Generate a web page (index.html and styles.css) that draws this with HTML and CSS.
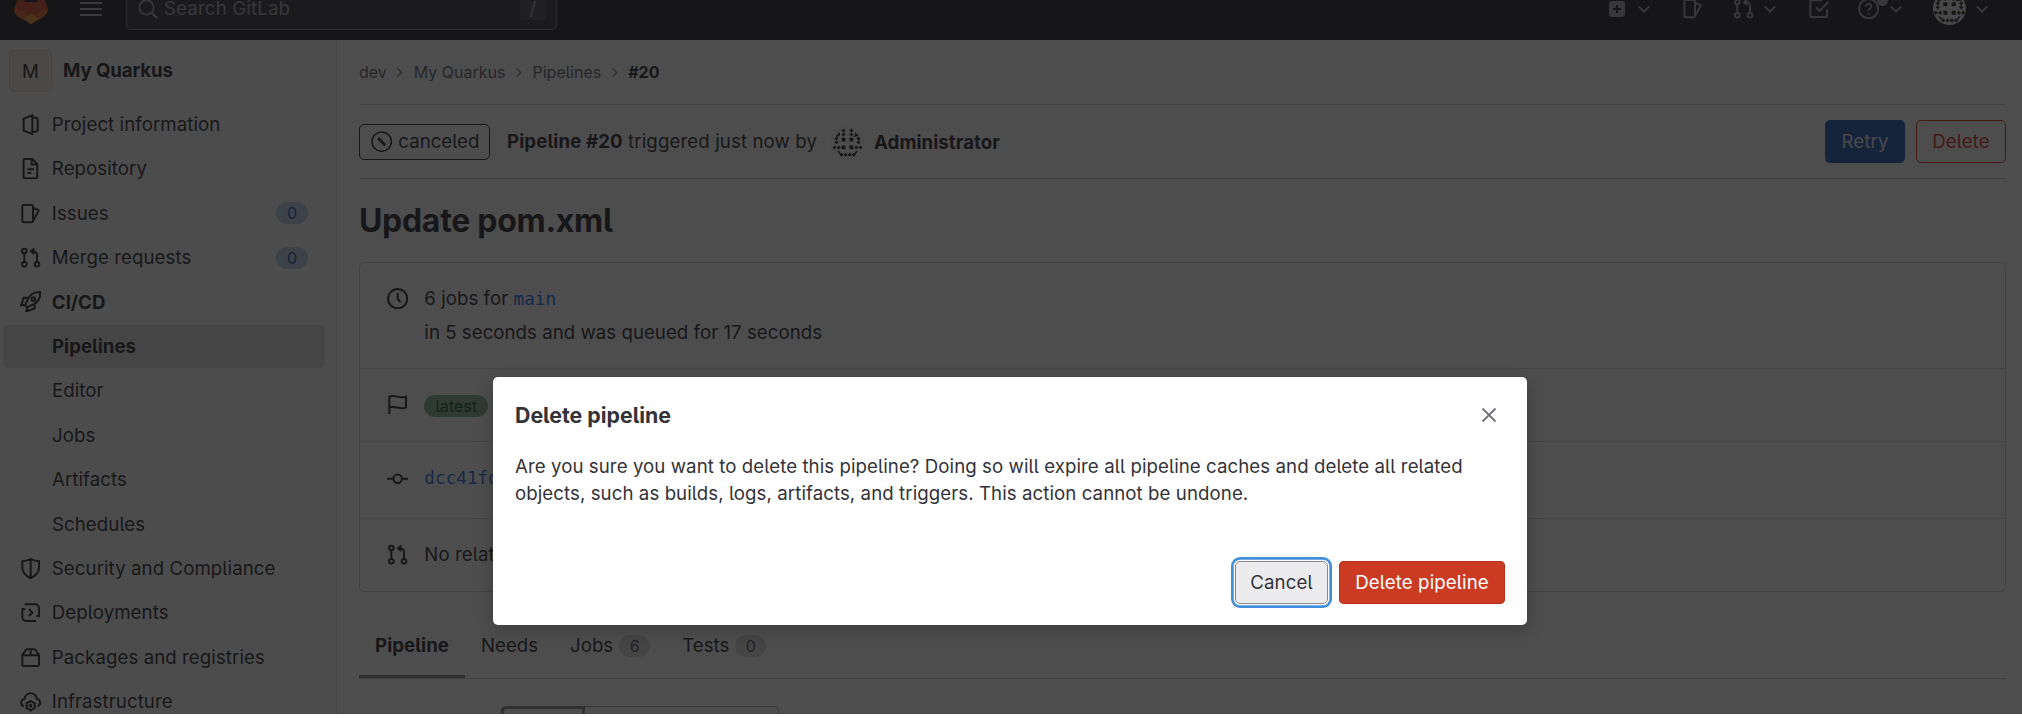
FILE: index.html
```html
<!DOCTYPE html>
<html lang="en">
<head>
<meta charset="utf-8">
<title>Pipeline #20 · My Quarkus · GitLab</title>
<link rel="stylesheet" href="styles.css">
</head>
<body>
<svg class="defs" aria-hidden="true">
  <symbol id="chevron" viewBox="0 0 12 12"><path d="M1.5 3.700 6 8.200l4.500-4.500"/></symbol>
  <symbol id="crumb" viewBox="0 0 12 12"><path d="M4 2l4 4-4 4"/></symbol>
  <symbol id="project" viewBox="0 0 16 16"><path d="M9.250 1v14L2.750 12.500v-9zM9.250 2.750h2.500a1.500 1.500 0 0 1 1.500 1.500v7.500a1.500 1.500 0 0 1-1.500 1.500h-2.500"/></symbol>
  <symbol id="doc" viewBox="0 0 16 16"><path d="M3.700.750h5.500l3.800 3.800v9.700a1 1 0 0 1-1 1H3.700a1 1 0 0 1-1-1V1.750a1 1 0 0 1 1-1zM8.750 1v3.800h4M5.500 8.500h5M5.500 11.250h3"/></symbol>
  <symbol id="issues" viewBox="0 0 16 16"><path d="M2.750 1.500h6a1 1 0 0 1 1 1v11a1 1 0 0 1-1 1h-6a1 1 0 0 1-1-1v-11a1 1 0 0 1 1-1zM10 3.600l3.600 1.500a.6.6 0 0 1 .3.800L10 13.200"/></symbol>
  <symbol id="merge" viewBox="0 0 16 16"><circle cx="3.250" cy="3" r="1.750"/><circle cx="3.250" cy="13" r="1.750"/><circle cx="12.750" cy="13" r="1.750"/><path d="M3.250 4.750v6.500M12.750 11.250V6a2.750 2.750 0 0 0-2.750-2.750H8.500M10.600 1.100 8.300 3.250l2.300 2.100"/></symbol>
  <symbol id="rocket" viewBox="0 0 16 16"><path d="M15.200.8C10.500.6 6.600 3 5 8.200L3.700 10.500l1.800 1.800L7.800 11C13 9.400 15.400 5.500 15.200.8zM6.200 5.200 2.800 5 .8 10.800l3-.5M10.800 9.800l.2 3.400-6.200 2 .7-3"/><circle cx="10" cy="6" r="1.400"/></symbol>
  <symbol id="shield" viewBox="0 0 16 16"><path d="M8 .9c2 1 4 1.500 6.250 1.500v5c0 3.600-2.500 6-6.250 7.800C4.250 13.400 1.750 11 1.750 7.400v-5C4 2.400 6 1.900 8 .9zM8 1v14"/></symbol>
  <symbol id="deploy" viewBox="0 0 16 16"><path d="M3.500 1.750h8A2.750 2.750 0 0 1 14.250 4.500v6h-1.900M12 14.250H4.500a2.750 2.750 0 0 1-2.750-2.750V5.250H4M6.700 5.500 9.200 8l-2.500 2.500"/></symbol>
  <symbol id="package" viewBox="0 0 16 16"><path d="M1.750 6v7.250a1 1 0 0 0 1 1h10.500a1 1 0 0 0 1-1V6L11.600 2.200a1 1 0 0 0-.8-.450H5.200a1 1 0 0 0-.8.450zM1.750 6.250h12.500M8 2v4"/></symbol>
  <symbol id="infra" viewBox="0 0 16 16"><path d="M2.800 11.500C1.600 11 .9 10 .9 8.800c0-1.500 1-2.600 2.500-2.900C3.700 3.400 5.600 1.700 8 1.700s4.300 1.700 4.600 4.200c1.500.3 2.500 1.400 2.500 2.900 0 1.200-.7 2.200-1.900 2.700"/><circle cx="8" cy="11" r="3.100"/><circle cx="8" cy="11" r=".6"/><path d="M8 6.700v1.200M8 14.100v1.200M4.300 8.900l1 .5M10.700 12.600l1 .5M11.700 8.900l-1 .5M5.300 12.600l-1 .5"/></symbol>
  <symbol id="clock" viewBox="0 0 16 16"><circle cx="8" cy="8" r="7.200"/><path d="M8 3.500V8l2.200 2.700"/></symbol>
  <symbol id="flag" viewBox="0 0 16 16"><path d="M1.750 15V1.900C6 .2 9.500 3.800 14.250 2v8.200c-4.500 1.800-8.200-1.700-12.500-.2"/></symbol>
  <symbol id="commit" viewBox="0 0 16 16"><circle cx="8" cy="8" r="3.200"/><path d="M0 8h4.700M11.300 8H16"/></symbol>
  <symbol id="identicon" viewBox="0 0 31 31">
    <path class="ink" d="M4 8 8 4v3L6 9zM27 8l-4-4v3l-2 2zM5 23h2l2 3v2zM26 23h-2l-2 3v2zM9.700 9.700h3.800v3.800H9.700zM17.500 9.700h3.800v3.800h-3.800zM9.700 17.500h3.800v3.800H9.700zM17.500 17.500h3.800v3.800h-3.800z"/>
    <path class="stitch" d="M9.800 2.500h3.600M9.800 6.500h3.600M17.600 2.500h3.600M17.600 6.500h3.600M2.700 10.500h3.600M24.700 10.500h3.600M2.700 14.300h3.600M24.700 14.300h3.600M.8 19.500h3.600M5 19.500h3.600M22.400 19.500H26M26.600 19.500h3.600M8 26.700h3.400M12 26.700h3.400M16 26.700h3.400M20 26.700h3.400"/>
    <path class="stitch" d="M11.600.7v3.600M11.600 4.700v3.600M19.400.7v3.600M19.400 4.700v3.600M4.500 8.700v3.600M26.500 8.700v3.600M4.500 12.500v3.600M26.500 12.500v3.600M2.600 17.700v3.600M6.800 17.700v3.600M24.200 17.700v3.600M28.400 17.700v3.600M9.700 25v3.400M13.700 25v3.400M17.700 25v3.400M21.700 25v3.400"/>
  </symbol>
</svg>

<div class="app">
  <header class="navbar">
    <svg class="logo" viewBox="0 0 34 32"><path fill="#d8432a" d="M6 0 1 14c-2 5 0 8 3 10l13 8 13-8c3-2 5-5 3-10L28 0l-5 10H11z"/><path fill="#e8622a" d="M0 17c4 0 8 2 11 4l6 5 6-5c3-2 7-4 11-4 0 3-2 6-4 7.500L17 32 4 24.500C2 23 0 20 0 17z"/><path fill="#e89a2a" d="m17 21.500 7 5L17 32l-7-5.500z"/></svg>
    <div class="burger"><i></i><i></i><i></i></div>
    <div class="search">
      <svg class="icon" viewBox="0 0 16 16"><circle cx="6.800" cy="6.800" r="5.700"/><path d="m11 11 4.200 4.200"/></svg>
      <span>Search GitLab</span><kbd>/</kbd>
    </div>
    <nav class="tools">
      <div class="tool t-new"><span class="new"><svg viewBox="0 0 16 16"><path d="M8 4v8M4 8h8"/></svg></span><svg class="chev"><use href="#chevron"/></svg></div>
      <div class="tool t-issues"><svg class="icon"><use href="#issues"/></svg></div>
      <div class="tool t-merge"><svg class="icon"><use href="#merge"/></svg><svg class="chev"><use href="#chevron"/></svg></div>
      <div class="tool t-todo"><svg class="icon" viewBox="0 0 16 16"><path d="M10.500 1.750H2.750a1 1 0 0 0-1 1v10.500a1 1 0 0 0 1 1h10.500a1 1 0 0 0 1-1V8.500M6 7l2.700 2.700L15.300 3"/></svg></div>
      <div class="tool t-help"><svg class="icon" viewBox="0 0 16 16"><circle cx="8" cy="8" r="7.200"/><path d="M6 6.300c0-2.600 4.200-2.400 4 .1C9.900 7.900 8 7.800 8 9.500M8 11v1.400"/></svg><b class="dot"></b><svg class="chev"><use href="#chevron"/></svg></div>
      <div class="tool t-user"><svg class="face light"><use href="#identicon"/></svg><svg class="chev"><use href="#chevron"/></svg></div>
    </nav>
  </header>

  <div class="columns">
    <aside class="sidebar">
      <div class="project"><span class="letter">M</span><strong>My Quarkus</strong></div>
      <a class="item"><svg class="icon"><use href="#project"/></svg><span>Project information</span></a>
      <a class="item"><svg class="icon"><use href="#doc"/></svg><span>Repository</span></a>
      <a class="item"><svg class="icon"><use href="#issues"/></svg><span>Issues</span><em>0</em></a>
      <a class="item"><svg class="icon"><use href="#merge"/></svg><span>Merge requests</span><em>0</em></a>
      <a class="item bold"><svg class="icon"><use href="#rocket"/></svg><span>CI/CD</span></a>
      <a class="item sub bold active"><span>Pipelines</span></a>
      <a class="item sub"><span>Editor</span></a>
      <a class="item sub"><span>Jobs</span></a>
      <a class="item sub"><span>Artifacts</span></a>
      <a class="item sub"><span>Schedules</span></a>
      <a class="item"><svg class="icon"><use href="#shield"/></svg><span>Security and Compliance</span></a>
      <a class="item"><svg class="icon"><use href="#deploy"/></svg><span>Deployments</span></a>
      <a class="item"><svg class="icon"><use href="#package"/></svg><span>Packages and registries</span></a>
      <a class="item"><svg class="icon"><use href="#infra"/></svg><span>Infrastructure</span></a>
    </aside>

    <main class="content">
      <div class="crumbs"><span>dev</span><svg><use href="#crumb"/></svg><span>My Quarkus</span><svg><use href="#crumb"/></svg><span>Pipelines</span><svg><use href="#crumb"/></svg><b>#20</b></div>
      <div class="status">
        <span class="canceled"><svg class="icon" viewBox="0 0 16 16"><circle cx="8" cy="8" r="7.300"/><path class="slash" d="m5.300 5.300 5.400 5.400"/></svg><span>canceled</span></span>
        <span class="who"><b>Pipeline #20</b> triggered just now by</span>
        <svg class="face"><use href="#identicon"/></svg>
        <b class="admin">Administrator</b>
        <span class="actions"><button class="btn retry">Retry</button><button class="btn remove">Delete</button></span>
      </div>
      <h1>Update pom.xml</h1>
      <section class="card">
        <div class="row jobs"><svg class="icon"><use href="#clock"/></svg><div><p>6 jobs for <code>main</code></p><p class="second">in 5 seconds and was queued for 17 seconds</p></div></div>
        <div class="row flag"><svg class="icon"><use href="#flag"/></svg><span class="latest">latest</span></div>
        <div class="row commit"><svg class="icon"><use href="#commit"/></svg><code>dcc41fd8</code></div>
        <div class="row related"><svg class="icon"><use href="#merge"/></svg><span>No related merge requests found.</span></div>
      </section>
      <div class="tabs">
        <span class="tab current">Pipeline</span><span class="tab">Needs</span><span class="tab">Jobs<em>6</em></span><span class="tab">Tests<em>0</em></span>
      </div>
      <div class="switch"><span class="on"></span><span></span></div>
    </main>
  </div>

  <div class="backdrop">
    <div class="modal">
      <header><h2>Delete pipeline</h2><svg class="close" viewBox="0 0 16 16"><path d="m1.500 1.500 13 13M14.500 1.500l-13 13"/></svg></header>
      <p>Are you sure you want to delete this pipeline? Doing so will expire all pipeline caches and delete all related<br>objects, such as builds, logs, artifacts, and triggers. This action cannot be undone.</p>
      <footer><button class="btn cancel">Cancel</button><button class="btn danger">Delete pipeline</button></footer>
    </div>
  </div>
</div>
</body>
</html>
```
FILE: styles.css
```css
* { box-sizing: border-box; }
body {
  margin: 0;
  background: #fff;
  color: #1f1e24;
  font: 18.67px/26.67px Inter, "Liberation Sans", sans-serif;
  font-feature-settings: "cv05";
  letter-spacing: .07px;
}
p, h1, h2 { margin: 0; }
b, strong { font-weight: 650; }
em { font-style: normal; }
code { font: 17.7px/26.67px "DejaVu Sans Mono", monospace; letter-spacing: 0; color: #1868d8; }
svg { fill: none; stroke: currentColor; flex: none; display: block; }
.defs { display: none; }
.icon { width: 21.33px; height: 21.33px; stroke-width: 1.5; }

.app { position: relative; height: 714px; overflow: hidden; background: #fff; }

.navbar {
  display: flex;
  align-items: center;
  height: 64px;
  margin-top: -24px;
  padding-left: 14px;
  background: #1c1c20;
  color: #a4a4a9;
}
.logo { width: 34px; height: 32px; stroke: none; }
.burger { display: grid; gap: 4px; width: 22px; margin-left: 32px; padding-top: 1px; }
.burger i { height: 2px; background: #b4b4b9; }
.search {
  display: flex;
  align-items: center;
  width: 431px;
  height: 43px;
  margin-left: 24px;
  padding: 0 10px 0 11px;
  border: 1px solid #77777d;
  border-radius: 5px;
  background: #302f38;
}
.search span { margin-left: 6px; flex: 1; padding-top: 3px; letter-spacing: .15px; }
.search .icon { width: 20px; height: 20px; margin-top: 2px; }
.search kbd {
  width: 26px;
  height: 24px;
  border-radius: 4px;
  background: #46454d;
  font: inherit;
  line-height: 26px;
  text-align: center;
}
.tools { display: flex; flex: 1; justify-content: flex-end; padding-right: 33px; }
.tool { display: flex; align-items: center; height: 34px; padding-top: 1px; }
.chev { width: 14px; height: 14px; stroke-width: 1.6; }
.new { width: 16px; height: 16px; border-radius: 3px; background: #a4a4a9; margin-right: 12px; color: #1c1c20; }
.new svg { stroke-width: 2; }
.t-issues { margin-left: 31px; }
.t-merge { margin-left: 30px; }
.t-merge .icon { margin-right: 9px; }
.t-todo { margin-left: 31px; }
.t-help { margin-left: 28px; position: relative; }
.t-help .icon { margin-right: 10px; }
.dot { position: absolute; left: 19px; top: 4px; width: 11px; height: 11px; border-radius: 50%; background: #a4a4a9; }
.t-user { margin-left: 30px; }
.t-user .chev { margin-left: 9px; }
.face { width: 31px; height: 31px; border-radius: 50%; box-shadow: 0 0 0 1px #eeeef0; color: #1c1c0c; }
.ink { fill: currentColor; stroke: none; }
.stitch { stroke-width: 1.4; }
.light { width: 33px; height: 33px; background: #e6e6e8; box-shadow: none; }

.columns { display: flex; height: 674px; }
.sidebar {
  width: 337px;
  flex: none;
  padding: 9px 11px 0 3px;
  border-right: 1px solid #e2e2e4;
  background: #fbfbfb;
}
.project { display: flex; align-items: center; height: 43px; margin: 0 0 11.200px 6px; }
.project strong { padding-top: 1px; letter-spacing: -.1px; }
.letter {
  width: 43px;
  height: 42px;
  margin-right: 11px;
  border: 1px solid #e6d4c0;
  border-radius: 5px;
  background: #faead8;
  line-height: 41px;
  text-align: center;
}
.item { display: flex; align-items: center; height: 42.67px; margin-bottom: 1.750px; padding: 0 17px 0 16.500px; border-radius: 5px; }
.item span { padding-top: 1.500px; }
.item .icon { margin-right: 11px; }
.item em { margin-left: auto; width: 32px; background: #b8cfe4; color: #0a56bc; }
.item.sub { padding-left: 49px; }
.bold { font-weight: 650; letter-spacing: 0; }
.active { background: #dcdcde; }
em { height: 22px; border-radius: 11px; font-size: 16px; line-height: 22px; text-align: center; }

.content { flex: 1; padding: 0 16px 0 22px; }
.crumbs {
  display: flex;
  align-items: center;
  height: 65px;
  border-bottom: 1px solid #cfcfd2;
  font-size: 16px;
  letter-spacing: 0;
  color: #5c5b63;
}
.crumbs svg { width: 13px; height: 13px; margin: 0 8px 0 6px; stroke-width: 1.1; color: #77767d; }
.crumbs svg:nth-of-type(n+2) { margin: 0 7px; }
.crumbs b { color: #1f1e24; }
.status { display: flex; align-items: center; height: 74px; border-bottom: 1px solid #cfcfd2; }
.canceled {
  display: flex;
  align-items: center;
  width: 131px;
  height: 36px;
  margin-top: 1px;
  padding-left: 11px;
  border: 1px solid #1f1e24;
  border-radius: 5px;
  letter-spacing: 0;
}
.canceled .icon { margin-right: 6px; stroke-width: 1.2; }
.canceled .slash { stroke-width: 2.2; }
.who { margin: 0 15px 0 17px; padding-top: 2px; letter-spacing: .11px; }
.status .face { margin-top: 3px; }
.admin { margin-left: 11px; padding-top: 4px; letter-spacing: .05px; }
.actions { display: flex; gap: 11px; margin-left: auto; }
.btn {
  height: 43px;
  padding: 2px 0 0;
  border: 0;
  border-radius: 5px;
  font: inherit;
  letter-spacing: .12px;
  font-feature-settings: inherit;
}
.retry { width: 80px; background: #1550b0; color: #e8e8ea; }
.remove { width: 90px; border: 1px solid #d62a12; background: none; color: #d62a12; }
h1 { font-size: 32px; line-height: 40px; font-weight: 650; letter-spacing: -.3px; margin: 22px 0 21px; }
.card { border: 1px solid #cfcfd2; border-radius: 5px; height: 330px; }
.row { display: flex; align-items: center; padding-left: 27px; border-bottom: 1px solid #dcdcde; }
.row .icon { margin-right: 16px; }
.jobs { height: 106px; }
.jobs div { padding-top: 2px; letter-spacing: .03px; }
.jobs .icon { margin-top: -34px; }
.second { margin-top: 7px; }
.flag { height: 73px; }
.flag .latest { margin-top: 1px; }
.commit { height: 77px; padding-bottom: 3px; }
.related { height: 72px; border: 0; }
.latest { width: 64px; height: 22px; border-radius: 11px; background: #80b08c; color: #0c4a1c; font-size: 16px; line-height: 22px; text-align: center; }
.tabs { display: flex; height: 87px; padding-top: 21px; border-bottom: 1px solid #cfcfd2; }
.tab { display: flex; align-items: center; height: 65px; padding: 2px 16px 0; letter-spacing: 0; }
.tab em { width: 31px; margin: -2px 0 0 6px; background: #dcdcde; color: #4c4b51; }
.tab.current { font-weight: 650; border-bottom: 3px solid #89888d; padding-top: 5px; letter-spacing: .05px; }
.switch { display: flex; width: 278px; height: 43px; margin: 27px 0 0 142px; border: 1px solid #a4a3a8; border-radius: 5px; }
.on { width: 84px; margin: -1px; border: 3px solid #89888d; border-radius: 5px 0 0 5px; }

.backdrop { position: absolute; inset: 0; background: rgba(21, 21, 23, .76); padding-top: 377px; }
.modal {
  width: 1034px;
  height: 248px;
  margin-left: 493px;
  padding: 24px 22px 21px;
  display: flex;
  flex-direction: column;
  border-radius: 5px;
  background: #fff;
  color: #333238;
  box-shadow: 0 5px 16px rgba(0, 0, 0, .22);
}
.modal header { display: flex; justify-content: space-between; align-items: center; height: 28px; }
h2 { font-size: 21.33px; font-weight: 650; letter-spacing: 0; }
.close { width: 16px; height: 16px; margin-right: 8px; color: #737278; stroke-width: 1.8; }
.modal p { margin-top: 25px; white-space: nowrap; }
.modal footer { display: flex; justify-content: flex-end; gap: 11px; margin-top: auto; }
.cancel { width: 93px; background: #ececef; color: #333238; border: 1px solid #89888d; box-shadow: 0 0 0 1.300px #fff, 0 0 0 4px #428fdc; }
.danger { width: 166px; background: #cb3b24; color: #fff; box-shadow: inset 0 0 0 1px #b8301b; }
```
